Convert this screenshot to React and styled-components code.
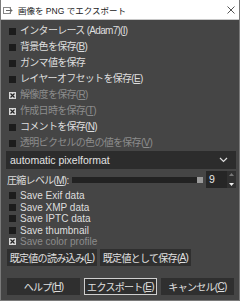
import React from "react";
import styled, { createGlobalStyle } from "styled-components";

const Global = createGlobalStyle`
    html, body {
        margin: 0;
        padding: 0;
        background: #454545;
    }
    body {
        font-family: "Liberation Sans", "Noto Sans CJK JP", sans-serif;
    }
`;

const Window = styled.div`
    width: 240px;
    height: 301px;
    box-sizing: border-box;
    display: flex;
    flex-direction: column;
    background: #454545;
    border: 1px solid #7a7a7a;
    border-top: none;
    overflow: hidden;
`;

const TitleBar = styled.div`
    height: 20px;
    flex: none;
    display: flex;
    align-items: center;
    background: #ffffff;
    border-bottom: 1px solid #c8c8c8;
    margin: 0 -1px;
    padding: 0 5px 0 3px;
    box-sizing: border-box;
`;

const TitleText = styled.span`
    flex: 1;
    margin-left: 4px;
    font-size: 8.5px;
    color: #222;
    white-space: nowrap;
`;

const Body = styled.div`
    display: flex;
    flex-direction: column;
    padding: 3px 3px 0 6px;
`;

const CheckRow = styled.div`
    height: ${p => p.$h || 16}px;
    line-height: ${p => p.$h || 16}px;
    flex: none;
    display: flex;
    align-items: center;
    gap: 4px;
    font-size: 10px;
    letter-spacing: ${p => (p.$latin ? "0" : "-0.7px")};
    color: ${p => (p.$disabled ? "#8c8c8c" : "#dedede")};
    white-space: nowrap;
`;

const Box = styled.span`
    width: 7px;
    height: 7px;
    flex: none;
    margin-left: 2px;
    background: ${p => (p.$checked ? "#d8d8d8" : "#1c1c1c")};
    display: flex;
    align-items: center;
    justify-content: center;
`;

const U = styled.span`
    text-decoration: underline;
`;

const Combo = styled.div`
    height: 18px;
    flex: none;
    margin: 0 0 0 -1px;
    display: flex;
    align-items: center;
    justify-content: space-between;
    background: #2c2c2c;
    padding: 0 8px 0 4px;
    font-size: 10.5px;
    color: #e2e2e2;
`;

const SliderRow = styled.div`
    height: 17px;
    flex: none;
    margin-top: 2px;
    display: flex;
    align-items: center;
    gap: 3px;
    font-size: 10px;
    letter-spacing: -0.7px;
    color: #dedede;
`;

const Trough = styled.div`
    flex: 1;
    height: 6px;
    background: #222;
    display: flex;
    justify-content: flex-end;
`;

const Handle = styled.div`
    width: 6px;
    height: 6px;
    background: #9a9a9a;
`;

const Spin = styled.div`
    width: 30px;
    height: 17px;
    display: flex;
    background: #262626;
    color: #e6e6e6;
    font-size: 10.5px;
    letter-spacing: 0;
`;

const SpinValue = styled.span`
    flex: 1;
    padding-left: 3px;
    line-height: 17px;
`;

const SpinArrows = styled.div`
    width: 9px;
    display: flex;
    flex-direction: column;
    justify-content: space-between;
    align-items: center;
    padding: 2px 0;
    background: #303030;
`;

const SaveList = styled.div`
    margin-top: 2px;
    display: flex;
    flex-direction: column;
`;

const ButtonRow = styled.div`
    display: flex;
    gap: 3px;
    margin-top: 1px;
`;

const Button = styled.div`
    height: 17px;
    width: ${p => p.$w}px;
    box-sizing: border-box;
    display: flex;
    align-items: center;
    justify-content: center;
    background: #2f2f2f;
    border: 1px solid ${p => (p.$focus ? "#cfcfcf" : "#2f2f2f")};
    font-size: 10px;
    letter-spacing: -0.7px;
    color: #e0e0e0;
    white-space: nowrap;
`;

const Footer = styled.div`
    display: flex;
    gap: 4px;
    padding: 0 5px 5px 6px;
    margin-top: auto;
`;

const Check = ({ checked }) => (
    <Box $checked={checked}>
        {checked && (
            <svg width="5" height="5" viewBox="0 0 5 5">
                <path d="M0.5 0.5L4.5 4.5M4.5 0.5L0.5 4.5" stroke="#222" strokeWidth="1.2" />
            </svg>
        )}
    </Box>
);

const Item = ({ checked, disabled, h, latin, children }) => (
    <CheckRow $disabled={disabled} $h={h} $latin={latin}>
        <Check checked={checked} />
        <span>{children}</span>
    </CheckRow>
);

const App = () => (
    <Window>
        <Global />
        <TitleBar>
            <svg width="11" height="10" viewBox="0 0 11 10">
                <rect x="0.5" y="2.5" width="7" height="6" fill="none" stroke="#888" />
                <path d="M3 5.5h6M7 3.5l2 2-2 2" fill="none" stroke="#666" />
            </svg>
            <TitleText>画像を PNG でエクスポート</TitleText>
            <svg width="8" height="8" viewBox="0 0 8 8">
                <path d="M0.5 0.5L7.5 7.5M7.5 0.5L0.5 7.5" stroke="#555" strokeWidth="1" />
            </svg>
        </TitleBar>
        <Body>
            <Item>インターレース (Adam7)(<U>I</U>)</Item>
            <Item>背景色を保存(<U>B</U>)</Item>
            <Item>ガンマ値を保存</Item>
            <Item>レイヤーオフセットを保存(<U>E</U>)</Item>
            <Item checked disabled>解像度を保存(<U>R</U>)</Item>
            <Item checked disabled>作成日時を保存(<U>T</U>)</Item>
            <Item>コメントを保存(<U>N</U>)</Item>
            <Item disabled>透明ピクセルの色の値を保存(<U>V</U>)</Item>
            <Combo>
                <span>automatic pixelformat</span>
                <svg width="9" height="6" viewBox="0 0 9 6">
                    <path d="M1 1l3.5 3.5L8 1" fill="none" stroke="#ddd" strokeWidth="1.2" />
                </svg>
            </Combo>
            <SliderRow>
                <span>圧縮レベル(<U>M</U>):</span>
                <Trough>
                    <Handle />
                </Trough>
                <Spin>
                    <SpinValue>9</SpinValue>
                    <SpinArrows>
                        <svg width="5" height="3" viewBox="0 0 5 3">
                            <path d="M0 3L2.5 0L5 3z" fill="#777" />
                        </svg>
                        <svg width="5" height="3" viewBox="0 0 5 3">
                            <path d="M0 0L2.5 3L5 0z" fill="#eee" />
                        </svg>
                    </SpinArrows>
                </Spin>
            </SliderRow>
            <SaveList>
                <Item h={11.5} latin>Save Exif data</Item>
                <Item h={11.5} latin>Save XMP data</Item>
                <Item h={11.5} latin>Save IPTC data</Item>
                <Item h={11.5} latin>Save thumbnail</Item>
                <Item h={11.5} latin checked disabled>Save color profile</Item>
            </SaveList>
            <ButtonRow>
                <Button $w={90}>既定値の読み込み(<U>L</U>)</Button>
                <Button $w={91}>既定値として保存(<U>A</U>)</Button>
            </ButtonRow>
        </Body>
        <Footer>
            <Button $w={73}>ヘルプ(<U>H</U>)</Button>
            <Button $w={73} $focus>エクスポート(<U>E</U>)</Button>
            <Button $w={73}>キャンセル(<U>C</U>)</Button>
        </Footer>
    </Window>
);

export default App;
